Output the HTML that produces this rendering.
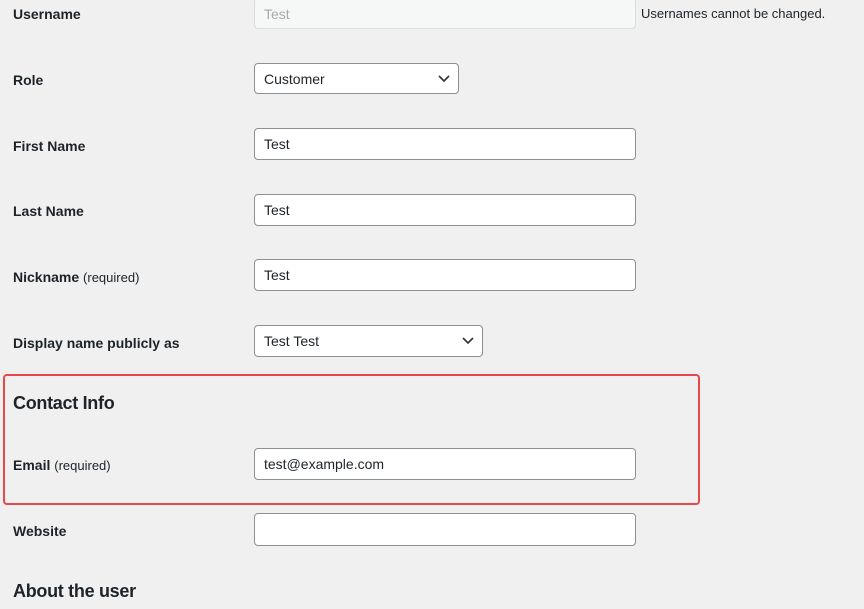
<!DOCTYPE html><html><head><style>
body{margin:0;width:864px;height:609px;background:#f0f0f1;font-family:"Liberation Sans",sans-serif;color:#1d2327;position:relative;overflow:hidden}
.l{position:absolute;left:13px;font-size:14px;font-weight:bold;line-height:20px}
.l small{font-weight:normal;font-size:13px}
.i{position:absolute;left:254px;width:382px;height:31px;box-sizing:border-box;border:1px solid #8c8f94;border-radius:4px;background:#fff;font-size:14px;line-height:31px;padding-left:9px}
.s svg{position:absolute;right:8px;top:11px}
h2{position:absolute;left:13px;margin:0;font-size:18px;font-weight:bold;line-height:24px;letter-spacing:-0.3px}
</style></head><body>
<div class="l" style="top:4px">Username</div>
<div class="i" style="top:-2px;height:31px;background:#f6f7f7;border-color:#dcdcde;color:#a7aaad">Test</div>
<div style="position:absolute;left:641px;top:6px;font-size:13px">Usernames cannot be changed.</div>
<div class="l" style="top:70px">Role</div>
<div class="i s" style="top:63px;width:205px">Customer<svg width="12" height="8" viewBox="0 0 12 8"><path d="M1 1l5 5 5-5" fill="none" stroke="#2c3338" stroke-width="1.6"/></svg></div>
<div class="l" style="top:136px">First Name</div>
<div class="i" style="top:128px;height:32px">Test</div>
<div class="l" style="top:201px">Last Name</div>
<div class="i" style="top:194px;height:32px">Test</div>
<div class="l" style="top:267px">Nickname <small>(required)</small></div>
<div class="i" style="top:259px;height:32px">Test</div>
<div class="l" style="top:333px">Display name publicly as</div>
<div class="i s" style="top:325px;width:229px;height:32px">Test Test<svg width="12" height="8" viewBox="0 0 12 8"><path d="M1 1l5 5 5-5" fill="none" stroke="#2c3338" stroke-width="1.6"/></svg></div>
<div style="position:absolute;left:3px;top:374px;width:693px;height:127px;border:2px solid #e8484a;border-radius:4px"></div>
<h2 style="top:391px">Contact Info</h2>
<div class="l" style="top:455px">Email <small>(required)</small></div>
<div class="i" style="top:448px;height:32px">test@example.com</div>
<div class="l" style="top:521px">Website</div>
<div class="i" style="top:513px;height:33px"></div>
<h2 style="top:579px">About the user</h2>
</body></html>
